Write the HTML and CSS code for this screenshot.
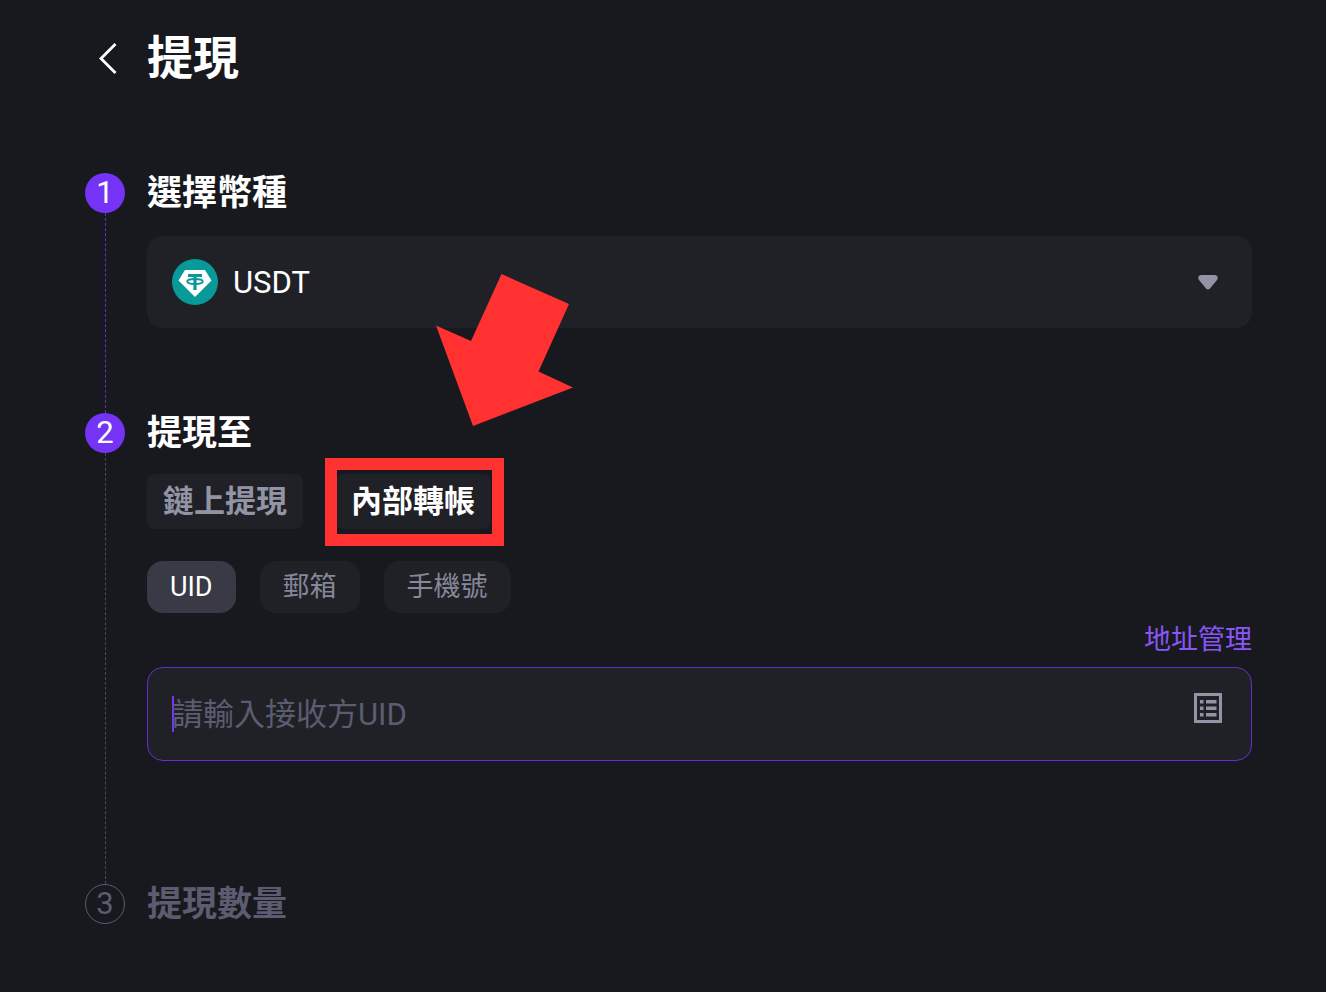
FILE: index.html
```
<!DOCTYPE html>
<html lang="zh-Hant">
<head>
	<meta charset="UTF-8">
	<meta name="viewport" content="width=device-width, initial-scale=1">
	<title>提現</title>
	<link rel="stylesheet" href="styles.css">
</head>
<body>
	<main class="withdraw">
		<header class="pageHead">
			<a href="#" class="back" aria-label="返回">
				<svg width="20" height="32" viewBox="0 0 20 32">
					<path d="M18.500 2 4 16.500l14.500 14.500" fill="none" stroke="#fff" stroke-width="2.800"/>
				</svg>
			</a>
			<h1>提現</h1>
		</header>

		<section class="step done">
			<span class="num">1</span>
			<div class="stepBody">
				<h2><label for="coin">選擇幣種</label></h2>
				<div class="coinBox">
					<svg class="coinIcon" width="46" height="46" viewBox="0 0 46 46">
						<circle cx="23" cy="23" r="23" fill="#089998"/>
						<path d="M13 11h20l6.500 10.500L23 38 6.500 21.500z" fill="#fff"/>
						<g fill="none" stroke="#089998">
							<path d="M16 16.500h14" stroke-width="3"/>
							<path d="M23 16.500v14.500" stroke-width="3.200"/>
							<ellipse cx="23" cy="22.500" rx="7.800" ry="2.500" stroke-width="1.800"/>
						</g>
					</svg>
					<select id="coin" class="coin">
						<option>USDT</option>
					</select>
					<svg class="arrowDown" width="20" height="15" viewBox="0 0 20 15">
						<path d="M3 0h14q2.500 0 2.800 2.500 0 1.500-1 2.700l-7 8.500q-1.800 1.600-3.600 0l-7-8.500q-1-1.200-1-2.700Q.5 0 3 0z" fill="#9294a5"/>
					</svg>
				</div>
			</div>
		</section>

		<section class="step">
			<span class="num">2</span>
			<div class="stepBody">
				<h2>提現至</h2>
				<div class="tabs">
					<button type="button" class="tab">鏈上提現</button>
					<div class="marked">
						<button type="button" class="tab active">內部轉帳</button>
						<svg class="pointer" width="137" height="152" viewBox="0 0 137 152">
							<path d="M65.500 0 133 30 102.500 97.500 137 113.500 37 152 0 51.500 35 67z" fill="#ff3131"/>
						</svg>
					</div>
				</div>
				<div class="chips">
					<button type="button" class="chip active">UID</button>
					<button type="button" class="chip">郵箱</button>
					<button type="button" class="chip">手機號</button>
				</div>
				<a href="#" class="manage">地址管理</a>
				<div class="field">
					<input type="text" class="uid" aria-label="請輸入接收方UID" placeholder="請輸入接收方UID">
					<button type="button" class="book" aria-label="地址簿">
						<svg width="28" height="30" viewBox="0 0 28 30">
							<path d="M1.500 1.500h25v27h-25z" fill="none" stroke="#9294a5" stroke-width="3"/>
							<path d="M6 7h3.500v3.500H6zM6 13.500h3.500V17H6zM6 20h3.500v3.500H6zM12 7h10.500v3.500H12zM12 13.500h10.500V17H12zM12 20h10.500v3.500H12z" fill="#9294a5"/>
						</svg>
					</button>
				</div>
			</div>
		</section>

		<section class="step todo">
			<span class="num">3</span>
			<div class="stepBody">
				<h2>提現數量</h2>
			</div>
		</section>
	</main>
</body>
</html>
```
FILE: styles.css
```
* {
	padding: 0;
	margin: 0;
	box-sizing: border-box;
	text-decoration: none;
}
body {
	background: #18191e;
	color: #fff;
	font-family: Roboto, "Noto Sans CJK TC", sans-serif;
}
button, select, input {
	font-family: inherit;
	border: none;
	outline: none;
	background: none;
}
button {
	cursor: pointer;
}
.withdraw {
	padding: 24px 74px 24px 85px;
}

/* 標題列 */
.pageHead {
	display: flex;
	align-items: center;
	gap: 30px;
	padding-left: 12px;
	height: 68px;
	margin-bottom: 76px;
}
.back svg {
	display: block;
}
h1 {
	font-size: 46px;
	line-height: 66px;
	font-weight: 700;
}

/* 步驟：左邊數字和虛線，右邊內容 */
.step {
	display: grid;
	grid-template-columns: 40px 1fr;
	column-gap: 22px;
}
.num {
	display: flex;
	flex-direction: column;
	align-items: center;
	font-size: 31px;
	line-height: 40px;
	position: relative;
	z-index: 0;
	margin-top: 5px;
}
.num:before {
	content: '';
	position: absolute;
	z-index: -1;
	top: 0;
	left: 0;
	width: 40px;
	height: 40px;
	box-sizing: border-box;
	border-radius: 50%;
	background: #7433f5;
}
.num:after {
	content: '';
	flex: 1;
	border-left: 1px dashed #494a55;
	margin-bottom: -5px;
}
.done .num:after {
	border-color: #6530c9;
}
.todo .num:before {
	background: none;
	border: 1px solid #5b5c6e;
}
.todo .num:after {
	display: none;
}
.todo {
	color: #5b5c70;
}
h2 {
	font-size: 35px;
	line-height: 52px;
	font-weight: 700;
}

/* 幣種 */
.coinBox {
	position: relative;
	display: grid;
	align-items: center;
	height: 92px;
	margin: 16px 0 80px;
	border-radius: 16px;
	background: #202126;
}
.coin {
	grid-area: 1 / 1;
	width: 100%;
	height: 92px;
	padding-left: 86px;
	color: #fff;
	font-size: 31px;
	-webkit-appearance: none;
	        appearance: none;
}
.coinIcon {
	grid-area: 1 / 1;
	margin-left: 25px;
	pointer-events: none;
}
.arrowDown {
	grid-area: 1 / 1;
	justify-self: end;
	margin-right: 34px;
	pointer-events: none;
}

/* 提現方式 */
.tabs {
	display: flex;
	gap: 32px;
	margin-top: 14px;
}
.tab {
	display: block;
	height: 55px;
	padding: 0 16px;
	border-radius: 8px;
	background: #202126;
	color: #9294a5;
	font-size: 31px;
	line-height: 54px;
	font-weight: 700;
}
.tab.active {
	color: #fff;
}
.marked {
	position: relative;
}
.marked:after {
	content: '';
	position: absolute;
	top: -16px;
	right: -13px;
	bottom: -17px;
	left: -10px;
	border: 12px solid #ff3131;
	pointer-events: none;
}
.pointer {
	position: absolute;
	left: 101px;
	top: -200px;
	pointer-events: none;
}
.chips {
	display: flex;
	gap: 24px;
	margin-top: 32px;
}
.chip {
	height: 52px;
	padding: 0 23px;
	border-radius: 16px;
	background: #202126;
	color: #85879a;
	font-size: 27px;
	line-height: 50px;
}
.chip.active {
	background: #393a46;
	color: #fff;
}
.manage {
	display: block;
	width: max-content;
	margin: 6px 0 6px auto;
	color: #8956f8;
	font-size: 27px;
	line-height: 42px;
}

/* 輸入框 */
.field {
	display: flex;
	align-items: center;
	height: 94px;
	margin-bottom: 118px;
	padding: 0 29px 0 24px;
	border: 1px solid #6530c9;
	border-radius: 16px;
	background: #202126;
}
.uid {
	flex: 1;
	min-width: 0;
	height: 36px;
	box-shadow: inset 2px 0 #7433f5;
	color: #fff;
	font-size: 31px;
}
.uid::placeholder {
	color: #5b5c70;
	opacity: 1;
}
.book {
	padding-bottom: 12px;
}
.book svg {
	display: block;
}
```
